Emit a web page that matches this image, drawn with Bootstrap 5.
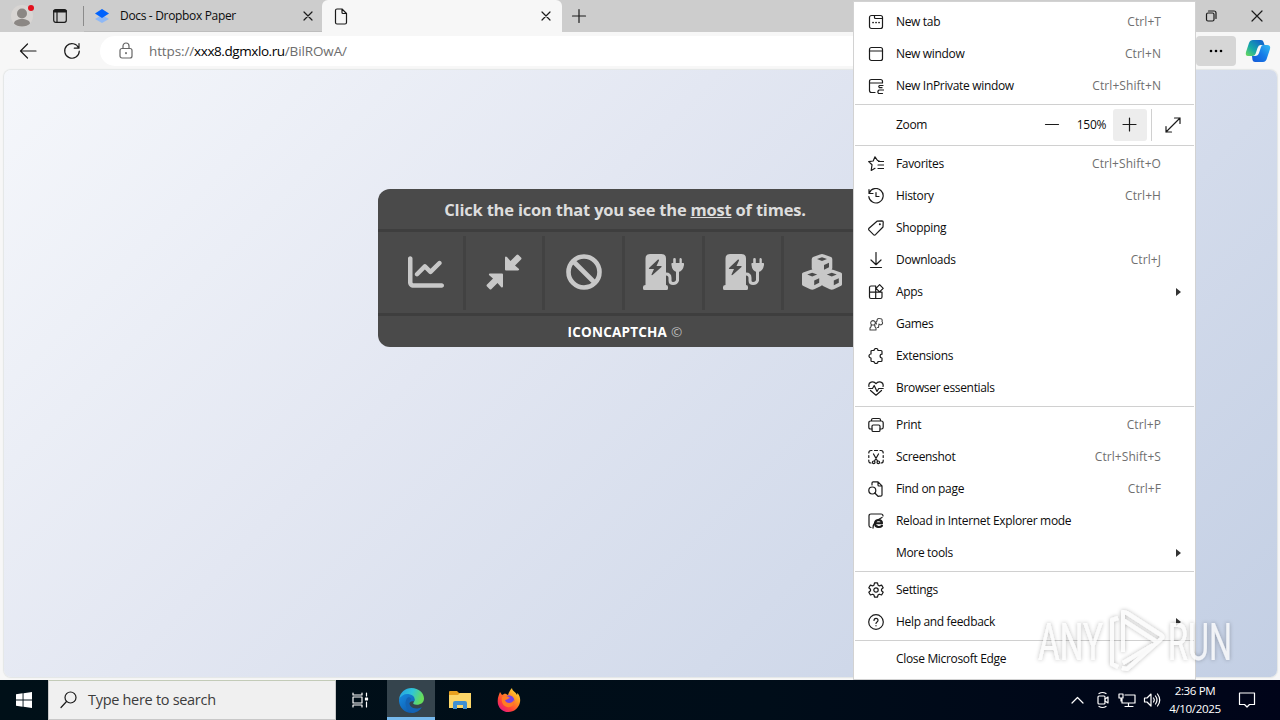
<!DOCTYPE html>
<html lang="en">
<head>
    <meta charset="UTF-8">
    <meta name="viewport" content="width=device-width, initial-scale=1.0">
    <title>Desktop</title>
    <link href="https://cdn.jsdelivr.net/npm/bootstrap@5.3.0/dist/css/bootstrap.min.css" rel="stylesheet">
    <style>
        body { width: 1280px; height: 720px; font-family: "Open Sans", "Noto Sans", sans-serif; font-size: 12px; line-height: 16px; color: #0c0c0c; background: #f7f7f7; letter-spacing: -.33px; }
        svg { display: block; flex: none; }
        .line { fill: none; stroke: #1b1b1b; stroke-width: 1.2; stroke-linecap: round; stroke-linejoin: round; }

        /* tabs */
        .tab-strip { height: 32px; background: #cdcdcd; }
        .profile { margin-left: 10px; }
        .split { width: 1px; height: 20px; margin-left: 16px; background: #8b8b8b; }
        .tab-idle { width: 238px; height: 32px; padding-left: 10px; padding-right: 8px; border-bottom: 1px solid #bdbdbd; }
        .tab-title { margin-left: 10px; }
        .tab-open { width: 240px; height: 32px; padding-left: 12px; padding-right: 10px; background: #f7f7f7; border-radius: 6px 6px 0 0; }

        /* toolbar */
        .tool-bar { height: 38px; background: #f7f7f7; }
        .back { margin-left: 19px; }
        .reload, .more-btn { margin-left: 26px; }
        .address { width: 1070px; height: 30px; margin-left: 19px; padding-left: 18px; border-radius: 15px; background: #fff; font-size: 13.5px; letter-spacing: -.12px; color: #6d6d6d; }
        .address b { font-weight: 400; color: #000; letter-spacing: -.42px; }
        .address svg { margin-right: 15px; }
        .more-btn { width: 40px; height: 30px; border-radius: 4px; background: #d6d6d6; }
        .copilot { margin-left: 9px; }

        /* page */
        .page-area { width: 1273px; height: 607px; margin-left: 4px; border-radius: 7px; background: linear-gradient(135deg, #f5f7fb 0%, #e3e7f2 38%, #c3cfe4 100%); box-shadow: 0 0 1px 1px #e3e6e6; }
        .captcha { width: 494px; height: 158px; margin-left: 374px; margin-top: 119px; border-radius: 12px; background: #4a4a4a; color: #ddd; }
        .captcha-title { height: 43px; border-bottom: 3px solid #3e3e3e; font-size: 16.5px; font-weight: 700; letter-spacing: -.2px; padding-top: 2px; }
        .captcha-icons { height: 84px; padding: 4px 7px 4px 8px; border-bottom: 3px solid #3e3e3e; }
        .captcha-icons > div { width: 79.7px; height: 74px; border-right: 3px solid #424242; padding-bottom: 3px; }
        .captcha-icons > div:last-child { border: 0; }
        .captcha-icons > div:first-child svg { margin-left: 3px; }
        .captcha-foot { height: 31px; font-size: 13.5px; color: #bbb; letter-spacing: .2px; }
        .captcha-foot b { color: #fff; }
        .captcha svg { fill: #c8c8c8; }

        /* browser menu */
        .edge-menu { left: 853px; top: 1px; width: 343px; height: 679px; background: #fff; border: 1px solid #d2d2d2; padding-top: 4px; z-index: 5; }
        .edge-menu hr { margin: 2px 1px; border: 0; height: 1px; background: #d0d0d0; opacity: 1; }
        .item { height: 32px; padding-left: 14px; padding-right: 34px; }
        .item svg { margin-right: 12px; }
        .item kbd { margin-left: auto; padding: 0; background: none; font: inherit; color: #6f6f6f; letter-spacing: .07px; }
        .item .arrow { margin-left: auto; margin-right: -24px; width: 0; height: 0; border: 4px solid transparent; border-left: 5px solid #333; }
        .no-icon { padding-left: 42px; }
        .zoom-row { height: 40px; padding-left: 42px; margin-top: -2px; margin-bottom: -2px; }
        .zoom-value { margin-left: 17px; }
        .zoom-plus { width: 34px; height: 32px; background: #ededed; border-radius: 3px; margin-left: 7px; }
        .zoom-split { width: 1px; height: 32px; background: #d0d0d0; margin: 0 12px 0 4px; }
        .zoom-row .expand { margin-right: 13px; }

        /* taskbar */
        .task-bar { height: 40px; background: linear-gradient(90deg, #001018, #000d19 60%, #000419); }
        .start { width: 48px; }
        .search { width: 288px; height: 40px; background: #f0f0f0; border: 1px solid #c8c8c8; border-top-color: #c3cbb8; font-size: 14.5px; color: #3c3c3c; padding-left: 11px; letter-spacing: -.3px; }
        .search svg { margin-right: 11px; }
        .task { width: 48px; height: 40px; margin-right: 1px; }
        .task-view { margin-right: 3px; }
        .task-active { background: #35444d; border-bottom: 3px solid #76b9ed; padding-top: 3px; }
        .clock { width: 62px; margin-left: 3px; color: #fff; line-height: 18px; font-size: 11.6px; letter-spacing: -.38px; }
        .notices { margin: 0 24px 0 12px; }
        .tray { gap: 7px; }
        .tray .line, .notices .line, .task-view .line { stroke: #fff; }

        .watermark { left: 1030px; top: 602px; z-index: 9; overflow: visible; letter-spacing: 0; }
    </style>
</head>
<body class="overflow-hidden position-relative">

    <!-- tab strip -->
    <div class="tab-strip d-flex align-items-center">
        <svg class="profile" width="27" height="24" viewBox="0 0 27 24">
            <circle cx="12" cy="12" r="11" fill="#d8d5d3"/>
            <circle cx="12" cy="9.500" r="5" fill="#8b8784"/>
            <path d="M4 19.500c0-6 16-6 16 0-3 4-13 4-16 0z" fill="#8b8784"/>
            <circle cx="21" cy="4" r="3" fill="#e3101d"/>
        </svg>
        <svg class="ms-3 line" width="14" height="14" viewBox="0 0 14 14">
            <rect x=".7" y=".7" width="12.6" height="12.6" rx="2"/>
            <path d="M1.500 2.200h11" stroke-width="2.800"/><path d="M4 3v10"/>
        </svg>
        <div class="split"></div>
        <div class="tab-idle d-flex align-items-center">
            <svg width="16" height="16" viewBox="0 0 16 16">
                <path d="M8 7l7 4-7 4-7-4z" fill="#8fb8f5"/>
                <path d="M8 1l7 4.500L8 10 1 5.500z" fill="#0062fd"/>
            </svg>
            <span class="tab-title">Docs - Dropbox Paper</span>
            <svg class="line ms-auto" width="12" height="12"><path d="M2 2l8 8M10 2l-8 8"/></svg>
        </div>
        <div class="tab-open d-flex align-items-center">
            <svg class="line" width="14" height="17" viewBox="0 0 14 17"><path d="M1.500 2.500q0-1.500 1.500-1.500h5l4.500 4.500v9q0 1.500-1.500 1.500h-8q-1.500 0-1.500-1.500zM8 1v3.500q0 1 1 1h3.500"/></svg>
            <svg class="line ms-auto" width="12" height="12"><path d="M2 2l8 8M10 2l-8 8"/></svg>
        </div>
        <svg class="line ms-2" width="18" height="18"><path d="M9 2.500v13M2.500 9h13"/></svg>
        <svg class="line ms-auto me-4" width="14" height="14"><rect x="2.500" y="4" width="7.500" height="8" rx="1.500"/><path d="M4.500 2H10q2 0 2 2v5.500"/></svg>
        <svg class="line ms-2 me-3" width="14" height="14"><path d="M2 2l10 10M12 2L2 12"/></svg>
    </div>

    <!-- toolbar -->
    <div class="tool-bar d-flex align-items-center">
        <svg class="line back" width="18" height="18"><path d="M17 9H2M8.500 2L1.500 9l7 7"/></svg>
        <svg class="line reload" width="18" height="18"><path d="M15.700 6A7.300 7.300 0 1 0 16.300 9M16 1.500v4.700h-4.700"/></svg>
        <div class="address d-flex align-items-center">
            <svg class="line" width="16" height="18"><g stroke="#666"><rect x="2" y="6.500" width="12" height="9.500" rx="2"/><path d="M5 6.500V4a3 3 0 0 1 6 0v2.500"/><path d="M8 11v.3" stroke-width="1.800"/></g></svg>
            <span>https://<b>xxx8.dgmxlo.ru</b>/BilROwA/</span>
        </div>
        <div class="more-btn d-flex align-items-center justify-content-center">
            <svg width="16" height="4"><circle cx="3" cy="2" r="1.300"/><circle cx="8" cy="2" r="1.300"/><circle cx="13" cy="2" r="1.300"/></svg>
        </div>
        <svg class="copilot" width="26" height="24" viewBox="0 0 26 24">
            <defs>
                <linearGradient id="copA" x1="0" y1="1" x2="1" y2="0"><stop offset="0" stop-color="#6fdc58"/><stop offset=".4" stop-color="#16a9a8"/><stop offset=".85" stop-color="#1168c8"/></linearGradient>
                <linearGradient id="copB" x1="0" y1="1" x2="1" y2="0"><stop offset="0" stop-color="#1457d6"/><stop offset=".5" stop-color="#167be8"/><stop offset="1" stop-color="#31bdf2"/></linearGradient>
            </defs>
            <path d="M8 1h8q2 0 2.500 2l1 3h-4q-2 0-3 3l-2 6q-1 2-3 2H3q-3 0-2-4l3-9q1-3 4-3z" fill="url(#copA)"/>
            <path d="M18 6h4q4 0 3 4l-3 9q-1 4-4 4h-8q-2 0-2.500-2L7 17h3q3 0 4-3l2-6q.6-2 2-2z" fill="url(#copB)"/>
        </svg>
    </div>

    <!-- page -->
    <div class="page-area d-flex">
        <div class="captcha">
            <div class="captcha-title d-flex align-items-center justify-content-center"><span>Click the icon that you see the <u>most</u> of times.</span></div>
            <div class="captcha-icons d-flex">
                <div class="d-flex align-items-center justify-content-center">
                    <svg width="36" height="36" viewBox="0 0 512 512"><path d="M64 64c0-17.700-14.300-32-32-32S0 46.300 0 64V400c0 44.200 35.800 80 80 80H480c17.700 0 32-14.300 32-32s-14.300-32-32-32H80c-8.800 0-16-7.200-16-16V64zm406.600 86.600c12.500-12.500 12.500-32.800 0-45.300s-32.800-12.500-45.300 0L320 210.700l-57.400-57.400c-12.500-12.500-32.800-12.500-45.300 0l-112 112c-12.500 12.500-12.500 32.800 0 45.300s32.800 12.500 45.300 0L240 221.300l57.400 57.400c12.500 12.500 32.800 12.500 45.300 0l128-128z"/></svg>
                </div>
                <div class="d-flex align-items-center justify-content-center">
                    <svg width="36" height="36" viewBox="0 0 36 36"><path d="M19 3.500v12q0 1 1 1h12q2-.5.500-2l-3.500-3 6-6q1-1 0-2l-2.500-2.500q-1-1-2 0l-6 6-3.500-4q-1.500-1.300-2 .5zM17 32.500v-12q0-1-1-1H4q-2 .5-.5 2l3.500 3-6 6q-1 1 0 2L3.500 35q1 1 2 0l6-6 3.500 4q1.500 1.300 2-.5z"/></svg>
                </div>
                <div class="d-flex align-items-center justify-content-center">
                    <svg width="36" height="36" viewBox="0 0 36 36"><path d="M18 2.500a15.500 15.500 0 1 0 0 31 15.500 15.500 0 0 0 0-31zM7 7l22 22" fill="none" stroke="#c8c8c8" stroke-width="4.600"/></svg>
                </div>
                <div class="d-flex align-items-center justify-content-center">
                    <svg width="41" height="36" viewBox="0 0 41 36"><use href="#station"/></svg>
                </div>
                <div class="d-flex align-items-center justify-content-center">
                    <svg width="41" height="36" viewBox="0 0 41 36"><use href="#station"/></svg>
                </div>
                <div class="d-flex align-items-center justify-content-center">
                    <svg class="me-1" width="40" height="36" viewBox="0 0 40 36">
                        <defs>
                            <g id="cube">
                                <path d="M0-10q1 0 2 .4l7 2.500q1.300.6 1.300 2.300v8.900q0 1.700-1.500 2.400L2 9.800q-2 .9-4 0l-6.800-3.300q-1.500-.7-1.500-2.400v-8.900q0-1.700 1.300-2.300L-2-9.600Q-1-10 0-10z"/>
                                <path d="M0-6.800l5 1.900-5 2-5-2zM2 1l5-2.200v4.500L2 5.700z" fill="#4a4a4a"/>
                            </g>
                        </defs>
                        <use href="#cube" x="20" y="10"/><use href="#cube" x="10.200" y="25.500"/><use href="#cube" x="29.800" y="25.500"/>
                    </svg>
                </div>
            </div>
            <div class="captcha-foot d-flex align-items-center justify-content-center"><b class="me-1">ICONCAPTCHA</b>©</div>
        </div>
    </div>

    <!-- shared charging station shape -->
    <svg class="position-absolute" width="0" height="0">
        <symbol id="station" viewBox="0 0 41 36">
            <path d="M2.500 4.500Q2.500 0 7 0h11.500Q23 0 23 4.500V31q2 0 2 2v1.500q0 1.500-1.500 1.500H1.500Q0 36 0 34.500V33q0-2 2.500-2z"/>
            <path d="M15 5.500L6 14q-.5 1 .5 1H11l-2.500 5.500q0 1 1 .5l9-8q.5-1-.5-1h-4.500L16 6.500q.2-1.500-1-1z" fill="#4a4a4a"/>
            <path d="M23 20q4 0 4 4v2.500q0 3 3.200 3t4.300-3V17" fill="none" stroke="#c8c8c8" stroke-width="3"/>
            <path d="M31.500 4q1.300 0 1.300 1.300V9h3.700V5.300Q36.500 4 37.500 4t1.300 1.300V9h1.700q.8 0 .5 2-1 6.500-6.200 7Q29 17.500 28.500 11q-.3-2 .5-2h1.200V5.300Q30.200 4 31.500 4z"/>
        </symbol>
    </svg>

    <!-- taskbar -->
    <div class="task-bar d-flex align-items-center position-absolute bottom-0 start-0 w-100">
        <div class="start d-flex justify-content-center">
            <svg width="16" height="16" fill="#fff"><path d="M0 2.300L6.600 1.300V7.500H0zM7.500 1.200L16 0v7.500H7.500zM0 8.400h6.600v6.300L0 13.800zM7.500 8.400H16V16l-8.500-1.200z"/></svg>
        </div>
        <div class="search d-flex align-items-center">
            <svg class="line" width="17" height="18"><circle cx="10.500" cy="6.500" r="5.500"/><path d="M6.500 10.500L1 16.500"/></svg>
            <span>Type here to search</span>
        </div>
        <div class="task task-view d-flex align-items-center justify-content-center">
            <svg class="line" width="18" height="18"><path d="M2 2v2h9V2M2 16v-2h9v2M2 6h9v6H2zM15.500 2v3M15.500 11v5"/><path d="M14.500 7h2v2h-2z" fill="#fff"/></svg>
        </div>
        <div class="task task-active d-flex align-items-center justify-content-center">
            <svg width="25" height="25" viewBox="0 0 24 24">
                <defs>
                    <linearGradient id="edA" x1="0" y1="0" x2="1" y2=".3"><stop offset="0" stop-color="#249de5"/><stop offset=".55" stop-color="#2fc5d8"/><stop offset="1" stop-color="#66dc5b"/></linearGradient>
                    <linearGradient id="edB" x1="0" y1="0" x2="1" y2="1"><stop offset="0" stop-color="#168be0"/><stop offset="1" stop-color="#0d4da0"/></linearGradient>
                </defs>
                <path d="M0 11C1 4 6 0 12 0c7 0 12 5 12 10 0 4-3 6-7 6-3 0-4-1-3-2 2-3 0-7-5-7-4 0-7 1-9 4z" fill="url(#edA)"/>
                <path d="M0 11c2-4 6-6 10-5 4 .5 6 4 4.500 7-3-1-6 1-5 4 1 4 6 5 12 2-2 3-5 5-9.500 5C5 24-.5 18 0 11z" fill="url(#edB)"/>
                <path d="M8.500 9C5 11 5 21 13 23.900c4-.3 7-2.500 9-5.400-7 3-12 0-12-4 0-2 1-3 2-4-1-1.500-2-2-3.500-1.500z" fill="#1464b5"/>
            </svg>
        </div>
        <div class="task d-flex align-items-center justify-content-center">
            <svg width="22" height="20" viewBox="0 0 22 20">
                <path d="M0 2q0-1 1-1h7l2 2h11q1 0 1 1v4H0z" fill="#e8a11f"/><path d="M0 5h9l2-2h11v15H0z" fill="#fcd668"/>
                <path d="M4 19v-6q0-2 2-2h10q2 0 2 2v6h-4v-4H8v4z" fill="#3f8fd2"/>
            </svg>
        </div>
        <div class="task d-flex align-items-center justify-content-center">
            <svg width="24" height="24" viewBox="0 0 24 24">
                <defs><linearGradient id="fox" x1="1" y1="0" x2=".2" y2="1"><stop offset="0" stop-color="#fff04a"/><stop offset=".4" stop-color="#ff9820"/><stop offset=".75" stop-color="#ff4038"/><stop offset="1" stop-color="#e31587"/></linearGradient></defs>
                <path d="M15 0c0 3 4 4 5 7l.5-2c2.500 3 3 6 2.500 9-1 6-6 10-11.500 10C5 24 .5 19 .7 13c0-4 1.300-6 2.300-9l2 3 3-1.500c1.500.5 2 1 3 1.500 1-3 2-5 4-7z" fill="url(#fox)"/>
                <circle cx="12" cy="12.500" r="5.300" fill="#7542e5"/>
                <path d="M5 9c3-2 6-1 8 1-2 .5-3 2-5 2 1 4 7 4 9 0 1 5-3 8-7 7s-6-5-5-10z" fill="#ff7b24"/>
            </svg>
        </div>
        <div class="tray d-flex align-items-center ms-auto">
            <svg class="line" width="14" height="10"><path d="M2 8l5.500-5.500L13 8"/></svg>
            <svg class="line ms-1" width="16" height="18"><rect x="3" y="5" width="7" height="8" rx="1"/><path d="M10 8l3-2v6l-3-2M4 2.500q3.500-2 7 0M4 15.500q3.500 2 7 0"/></svg>
            <svg class="line" width="18" height="16"><path d="M7 3h10v8H4V7M10.500 11v3M7 14.500h8M1 2h4v4H1zM3 6v3h1"/></svg>
            <svg class="line" width="18" height="16"><path d="M1.500 6v4h2.500l4 4V2L4 6zM10.500 6q1.500 2 0 4M12.500 4q3 4 0 8M14.500 2q4.500 6 0 12"/></svg>
        </div>
        <div class="clock text-center">2:36 PM<br>4/10/2025</div>
        <div class="notices">
            <svg class="line" width="18" height="18"><path d="M1.500 2h15v11.500H11.500L9 16l-2.500-2.500h-5z"/></svg>
        </div>
    </div>

    <!-- browser menu -->
    <div class="edge-menu position-absolute">
        <div class="item d-flex align-items-center">
            <svg class="line" width="16" height="16"><rect x="1.500" y="1.500" width="13" height="13" rx="2"/><path d="M6.500 1.500v2q0 1 1 1h7"/><path d="M5 8.500h.1M8 8.500h.1M11 8.500h.1" stroke-width="1.700"/></svg>
            New tab<kbd>Ctrl+T</kbd>
        </div>
        <div class="item d-flex align-items-center">
            <svg class="line" width="16" height="16"><rect x="1.500" y="1.500" width="13" height="13" rx="2"/><path d="M1.500 5h13"/></svg>
            New window<kbd>Ctrl+N</kbd>
        </div>
        <div class="item d-flex align-items-center">
            <svg class="line" width="16" height="16"><path d="M7 14.500H3.500q-2 0-2-2v-9q0-2 2-2h9q2 0 2 2V5H1.500M15 7.500h-3.500q-1.500 1 0 2.200H14M15.800 12H11q-2 1.500-.5 3.500h4"/></svg>
            New InPrivate window<kbd>Ctrl+Shift+N</kbd>
        </div>
        <hr>
        <div class="zoom-row d-flex align-items-center">
            <span class="me-auto">Zoom</span>
            <svg class="line" width="16" height="16"><path d="M1.500 7.500h13"/></svg>
            <span class="zoom-value">150%</span>
            <div class="zoom-plus d-flex align-items-center justify-content-center"><svg class="line" width="16" height="16"><path d="M7.500 1v13M1 7.500h13"/></svg></div>
            <div class="zoom-split"></div>
            <svg class="line expand" width="18" height="18"><path d="M2 16L16 2M10.500 2H16v5.500M7.500 16H2v-5.500"/></svg>
        </div>
        <hr>
        <div class="item d-flex align-items-center">
            <svg class="line" width="16" height="16"><path d="M11 4.800L9.500 4.500 7 .8 5.200 5 .7 5.600 4 8.800 3.200 14.500 7 12.300M10.500 5.500H16M10 9h6M10 12.500h6"/></svg>
            Favorites<kbd>Ctrl+Shift+O</kbd>
        </div>
        <div class="item d-flex align-items-center">
            <svg class="line" width="16" height="16"><path d="M1 1.500v4h4M1.300 5A7.200 7.200 0 1 1 .8 8.500M8 4.500v4h3"/></svg>
            History<kbd>Ctrl+H</kbd>
        </div>
        <div class="item d-flex align-items-center">
            <svg class="line" width="16" height="16"><path d="M9 1.200L14 .8q1.200 0 1.200 1.200L15 7 7.500 14.700q-1 .7-2 0L1 10.200q-.7-1 0-2z"/><path d="M11.800 4.200h.1" stroke-width="1.900"/></svg>
            Shopping
        </div>
        <div class="item d-flex align-items-center">
            <svg class="line" width="16" height="16"><path d="M8 .5v12M3 8l5 4.700L13 8M2.500 15.500h11"/></svg>
            Downloads<kbd>Ctrl+J</kbd>
        </div>
        <div class="item d-flex align-items-center">
            <svg class="line" width="16" height="16"><path d="M7.500 2H3q-1.500 0-1.500 1.500V13q0 1.500 1.500 1.500h9.500q1.500 0 1.500-1.500V8.200H1.500M7.700 2v12.500M11.600.7l3.600 3.600-3.600 3.600L8 4.300z"/></svg>
            Apps<span class="arrow"></span>
        </div>
        <div class="item d-flex align-items-center">
            <svg class="line" width="16" height="16"><path d="M3.500 8.700a2.300 2.300 0 1 1 3 0q.2 2.300 1.500 3.300v2H2v-2q1.300-1 1.500-3.300zM3 9h4M8.500 8Q7.200 6 9 5q0-3 2.500-2.500Q15 2.500 14 5.500q1.500 2-.8 3.300-1.500.2-2.200-.8l-.5 3.500H9.500" stroke="#444" stroke-width="1.100"/></svg>
            Games
        </div>
        <div class="item d-flex align-items-center">
            <svg class="line" width="16" height="16"><path d="M6 2.500a2 2 0 0 1 4 0h3q1 0 1 1V6.200a1.900 1.900 0 0 0 0 3.800v2.500q0 1-1 1h-3a2 2 0 0 1-4 0H4q-1 0-1-1V10a2 2 0 0 1 0-4V3.500q0-1 1-1z"/></svg>
            Extensions
        </div>
        <div class="item d-flex align-items-center">
            <svg class="line" width="16" height="16"><path d="M1 6.500C-.2 2 5.500.2 8 3.700 10.500.2 16.200 2 15 6.500M2.500 10.500L8 15.200l5.500-4.700M.8 8.500h3.700l1.700-3 2.800 6 1.700-3h4.500"/></svg>
            Browser essentials
        </div>
        <hr>
        <div class="item d-flex align-items-center">
            <svg class="line" width="16" height="16"><path d="M3.500 4V3q0-1.500 1.500-1.500h6q1.500 0 1.500 1.500v1M4 12H2.500Q.8 12 .8 10.300V6Q.8 4 2.800 4h10.400q2 0 2 2v4.300q0 1.700-1.700 1.700H12"/><rect x="4" y="8" width="8" height="6.500" rx="1.300"/></svg>
            Print<kbd>Ctrl+P</kbd>
        </div>
        <div class="item d-flex align-items-center">
            <svg class="line" width="16" height="16"><path d="M3 14q-2.200 0-2.200-2v-1M.8 8.500v-2M.8 4q0-2.500 2.200-2.500h1M6.500 1.500h3M12 1.500h1q2.200 0 2.200 2.500M15.200 6.500v2M15.200 11v1q0 2-2.200 2M5.500 5l4 7M10.500 5l-4 7"/><circle cx="5.700" cy="13.300" r="1.300"/><circle cx="10.300" cy="13.300" r="1.300"/></svg>
            Screenshot<kbd>Ctrl+Shift+S</kbd>
        </div>
        <div class="item d-flex align-items-center">
            <svg class="line" width="16" height="16"><path d="M4 4V2Q4 .8 5.200.8H10l4 4V14q0 1.200-1.500 1.200H11M10 .8V4q0 1 1 1h3M6.800 12l3.500 3.500"/><circle cx="4.300" cy="9.500" r="3.500"/></svg>
            Find on page<kbd>Ctrl+F</kbd>
        </div>
        <div class="item d-flex align-items-center">
            <svg class="line" width="16" height="16"><path d="M3 14.500q-2-.3-2-2V3q0-2 2-2h10q2 0 2 2"/><path d="M14 12.700q-1.500 1.600-4 1.200-3.200-.6-3-3.700.3-3.200 3.600-3.200 3.400.2 3.400 3.300H7.500" stroke-width="2.100"/><path d="M5 15q-.5-6 9-10.500" stroke-width="1.300"/></svg>
            Reload in Internet Explorer mode
        </div>
        <div class="item no-icon d-flex align-items-center">More tools<span class="arrow"></span></div>
        <hr>
        <div class="item d-flex align-items-center">
            <svg class="line" width="16" height="16"><path d="M6.500.8h3l.5 2.300 1.300.8 2.300-.8 1.600 2.700L13.500 7.300v1.500l1.700 1.500-1.600 2.700-2.300-.8-1.300.8-.5 2.200h-3L6 13l-1.300-.8-2.300.8L.8 10.300l1.700-1.500V7.300L.8 5.800l1.600-2.700 2.300.8L6 3.100z"/><circle cx="8" cy="8" r="2.200"/></svg>
            Settings
        </div>
        <div class="item d-flex align-items-center">
            <svg class="line" width="16" height="16"><circle cx="8" cy="8" r="7.300"/><path d="M6 6.500q0-2.200 2-2.200t2 1.900q0 1-1 1.700T8 9.500M8 11.600v.2"/></svg>
            Help and feedback<span class="arrow"></span>
        </div>
        <hr>
        <div class="item no-icon d-flex align-items-center">Close Microsoft Edge</div>
    </div>

    <!-- watermark -->
    <svg class="watermark position-absolute" width="212" height="76" viewBox="0 0 212 76">
        <defs><filter id="glow" x="-10%" y="-10%" width="120%" height="120%"><feDropShadow dx="0" dy="0" stdDeviation="2" flood-color="#000" flood-opacity=".36"/></filter></defs>
        <g filter="url(#glow)" fill="#fff" fill-opacity=".8" font-family="Roboto, sans-serif" font-weight="400" font-size="51">
            <text x="8" y="58" textLength="65" lengthAdjust="spacingAndGlyphs">ANY</text>
            <text x="138" y="58" textLength="64" lengthAdjust="spacingAndGlyphs">RUN</text>
            <path d="M88 16l-6 2v44l6 3M93 50V10l4 1 34 22q3 2 0 4L97 67l-5-1M93 18l34 22M93 61l30-18" fill="none" stroke="#fff" stroke-opacity=".8" stroke-width="4" stroke-linejoin="round"/>
        </g>
    </svg>

    <script src="https://cdn.jsdelivr.net/npm/bootstrap@5.3.0/dist/js/bootstrap.bundle.min.js"></script>
</body>
</html>
